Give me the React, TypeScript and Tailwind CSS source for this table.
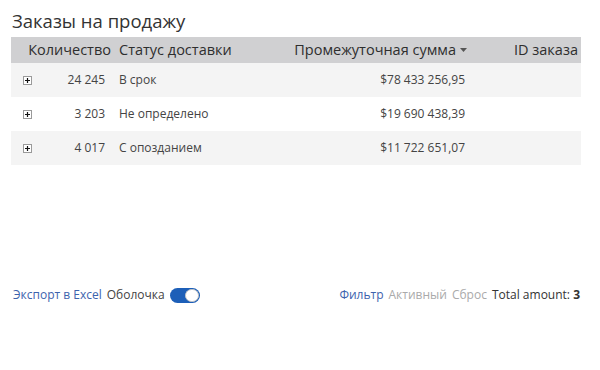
import { ChevronDown } from 'lucide-react';

// ====== Data ======
const rows = [
  { qty: '24 245', status: 'В срок', subtotal: '$78 433 256,95' },
  { qty: '3 203', status: 'Не определено', subtotal: '$19 690 438,39' },
  { qty: '4 017', status: 'С опозданием', subtotal: '$11 722 651,07' },
];

// ====== Expand box ======
function PlusBox() {
  return (
    <span className="flex items-center justify-center w-[9px] h-[9px] border border-[#9a9a9a] bg-white">
      <svg width="5" height="5" viewBox="0 0 5 5"><path d="M2.5 0v5M0 2.5h5" stroke="#111" strokeWidth="1.2" /></svg>
    </span>
  );
}

// ====== Toggle ======
function Toggle() {
  return (
    <span className="flex items-center w-[30px] h-[15px] rounded-full bg-[#1d5fb8] pl-[15px] pr-[1px]">
      <span className="w-[14px] h-[13px] rounded-full bg-white border border-[#c8c8c8]" />
    </span>
  );
}

// ====== Main Export ======
export default function App() {
  return (
    <div className="w-[600px] h-[370px] bg-white text-[#333] flex flex-col" style={{ fontFamily: '"Open Sans", "Noto Sans", sans-serif' }}>
      <h1 className="text-[18.5px] leading-[24px] text-[#333] pl-[12px] pt-[9px] pb-[4px]">Заказы на продажу</h1>

      <div className="ml-[11px] w-[570px]">
        {/* header */}
        <div className="flex items-center h-[26px] bg-[#d0d0d2] text-[14.5px] text-[#2e2e2e]">
          <div className="w-[101px] text-right pr-[1px]">Количество</div>
          <div className="w-[180px] pl-[7px]">Статус доставки</div>
          <div className="w-[177px] flex items-center justify-end gap-[4px] pr-[2px]">
            Промежуточная сумма
            <svg width="7" height="4" viewBox="0 0 7 4"><path d="M0 0h7L3.5 4z" fill="#555" /></svg>
          </div>
          <div className="flex-1 text-right pr-[3px]">ID заказа</div>
        </div>

        {/* rows */}
        {rows.map((r, i) => (
          <div key={i} className={`flex items-center h-[34px] text-[12px] text-[#444] ${i % 2 === 0 ? 'bg-[#f4f4f4]' : 'bg-white'}`}>
            <div className="w-[101px] flex items-center justify-between pl-[12px] pr-[7px]">
              <PlusBox />
              <span>{r.qty}</span>
            </div>
            <div className="w-[180px] pl-[7px]">{r.status}</div>
            <div className="w-[177px] text-right pr-[4px]">{r.subtotal}</div>
            <div className="flex-1" />
          </div>
        ))}
      </div>

      {/* footer */}
      <div className="mt-[121px] flex items-center justify-between pl-[13px] pr-[20px] text-[12px]">
        <div className="flex items-center gap-[5px]">
          <span className="text-[#3d63ad]">Экспорт в Excel</span>
          <span className="text-[#444]">Оболочка</span>
          <Toggle />
        </div>
        <div className="flex items-center gap-[5px]">
          <span className="text-[#3d63ad]">Фильтр</span>
          <span className="text-[#aaa]">Активный</span>
          <span className="text-[#aaa]">Сброс</span>
          <span className="text-[#333]">Total amount: <span className="font-bold">3</span></span>
        </div>
      </div>
    </div>
  );
}
